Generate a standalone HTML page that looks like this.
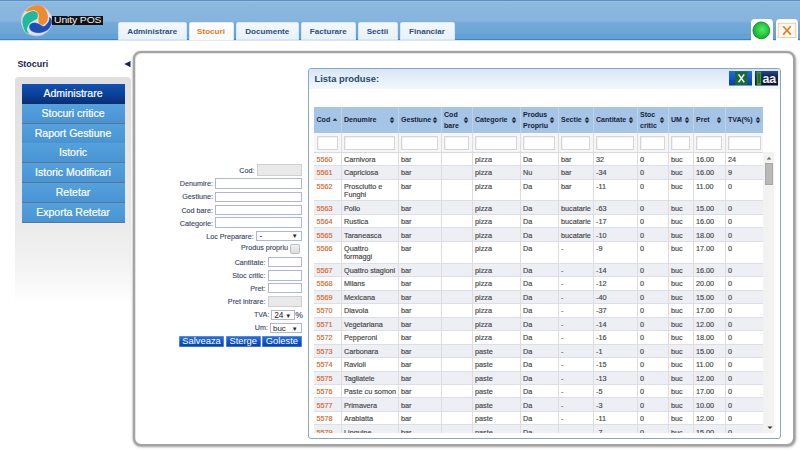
<!DOCTYPE html>
<html><head><meta charset="utf-8">
<style>
*{margin:0;padding:0;box-sizing:border-box}
html,body{width:800px;height:450px;overflow:hidden;background:#fff;font-family:"Liberation Sans",sans-serif}
.abs{position:absolute}
#hdr{position:absolute;left:0;top:0;width:800px;height:41px;
 background:linear-gradient(#5b8fc2 0,#5b8fc2 1px,#92bfe6 1px,#8ab8df 4px,#86b4dc 21px,#74a9d8 23px,#6aa6d4 33.8px,#6a9ec8 34.2px,#62a2da 35px,#62a2da 38.8px,#4a80b0 39.2px,#4a80b0 40px,#c8dcea 40.3px,#fff 41px)}
#logo{position:absolute;left:18px;top:2px;width:40px;height:38px}
#logotxt{position:absolute;left:52.2px;top:15.7px;width:51.3px;height:9.2px;background:#121212;overflow:hidden}
#logotxt span{position:absolute;left:1.6px;top:0.4px;color:#f4f4f4;font:8.9px/9px "Liberation Sans",sans-serif;white-space:nowrap;transform:scaleX(1.17);transform-origin:0 0;letter-spacing:-0.1px}
.tab{position:absolute;top:22.3px;height:18.2px;border-radius:3px 3px 0 0;background:linear-gradient(#f3f8fc,#e7f1f9);
 color:#2d4f7c;font:bold 8.1px/20px "Liberation Sans",sans-serif;text-align:center;box-shadow:0 0 0 0.6px #c9dcef inset}
.tab.act{background:linear-gradient(#ffffff,#f6fafd);color:#e07a2a;height:19px}
#greenbox{position:absolute;left:751px;top:19px;width:22px;height:22px;background:#fff;border-radius:4px 4px 0 0}
#xbox{position:absolute;left:776px;top:19px;width:22px;height:22px;background:#fff;border-radius:4px 4px 0 0}
#side-title{position:absolute;left:17.4px;top:58.6px;font:bold 8.95px/11px "Liberation Sans",sans-serif;color:#1c244e}
#side-arrow{position:absolute;left:124.4px;top:61.8px;width:0;height:0;border-top:2.8px solid transparent;border-bottom:2.8px solid transparent;border-right:6px solid #14245a}
#sidebox{position:absolute;left:15px;top:77px;width:115.5px;height:260px;border-radius:4px 4px 0 0;
 background:linear-gradient(#e1dfdd 0,#ebebeb 148px,#f3f3f3 190px,#fbfbfb 215px,#ffffff 228px)}
.mi{position:absolute;left:21.5px;width:103px;height:20px;color:#fff;font:10.5px/18.6px "Liberation Sans",sans-serif;text-align:center;
 background:linear-gradient(#53a1dd,#4a93d3);border-bottom:1.6px solid #5a7592;-webkit-text-stroke:0.2px #fff}
.mi.sel{background:linear-gradient(#0f52b5,#0a3f95 60%,#073077);border-bottom:1px solid #0b2f66}
#panel{position:absolute;left:132.8px;top:50.8px;width:662.5px;height:395px;border:2px solid #a3a3a3;border-radius:8px;background:#fff;
 box-shadow:0.8px 1px 2.5px rgba(0,0,0,0.35),0 0 2px rgba(0,0,0,0.15),inset 0.6px 0.6px 1px rgba(0,0,0,0.18)}
.lbl{position:absolute;font:7.2px/9px "Liberation Sans",sans-serif;color:#3a4666;text-align:right;white-space:nowrap;-webkit-text-stroke:0.12px #3a4666}
.inp{position:absolute;background:#fff;border:1px solid #aeb3ee}
.inp.dis{background:#e9e9e9;border:1px solid #cfcfcf}
.dd{position:absolute;background:#fff;border:1px solid #aeb3ee;font:8.4px/9px "Liberation Sans",sans-serif;color:#222}
.btn{position:absolute;top:335.8px;height:11.4px;color:#fff;font:9.35px/11px "Liberation Sans",sans-serif;text-align:center;
 background:linear-gradient(#2775e6,#0d52c9 55%,#0040b0);box-shadow:0 0 0 0.6px #7fa6e6 inset}
#lbox{position:absolute;left:307.6px;top:67.6px;width:473.4px;height:371.8px;border:1px solid #8aa6bf;border-radius:3px;background:#fff;overflow:hidden}
#ltitle{position:absolute;left:0;top:0;width:100%;height:20px;background:linear-gradient(#d6e6f5,#e8f1fa 60%,#f2f7fc)}
#ltitle span{position:absolute;left:5.9px;top:4.5px;font:bold 9.4px/11px "Liberation Sans",sans-serif;color:#274a6e}
.thead{position:absolute;left:314px;width:449.4px;background:#a6c5e6}
.hsep{position:absolute;width:1px;background:#bcd3ec}
.ht{position:absolute;font:bold 7.05px/10.8px "Liberation Sans",sans-serif;color:#15233a;white-space:nowrap}
.sic{position:absolute;width:6px;height:8px}
.si{position:absolute;top:0}
.filt{position:absolute;left:314px;width:449.4px;background:#f6f6f7;border-bottom:1px solid #d9d9de}
.fin{position:absolute;height:14.6px;background:#fff;border:1px solid #d6d6d6;box-shadow:inset 0.5px 0.5px 0 #e6e6e6}
.vsep{position:absolute;width:1px;background:#dcdce2}
#rows{position:absolute;left:314px;top:calc(152.20px + 0.5px);width:449.4px;height:280.8px;overflow:hidden}
.row{position:absolute;left:0;width:450px;background:#fff;border-bottom:1px solid #dedee6}
.row.odd{background:#eeeef5}
.td{position:absolute;top:3.1px;font:7.25px/8.1px "Liberation Sans",sans-serif;color:#444;white-space:nowrap;-webkit-text-stroke:0.15px #444}
.td.c0{color:#d2672a;-webkit-text-stroke:0.15px #d2672a}
#sb{position:absolute;left:763.3px;top:152.2px;width:10.6px;height:280.6px;background:#f2f2f2}
#thumb{position:absolute;left:765.4px;top:162.7px;width:7.8px;height:22.7px;background:#b9b9b9;border:0.6px solid #a6a6a6}
</style></head><body>
<div id="hdr"></div>
<svg id="logo" viewBox="0 0 40 38">
 <circle cx="18.6" cy="18.6" r="15.3" fill="#dfe3ec" stroke="#c4c2ce" stroke-width="0.9"/>
 <g transform="translate(18.6 18.6) scale(1.07) translate(-18.6 -18.6)">
 <path d="M8.40 9.30 C8.95 8.47 12.05 5.88 14.30 5.10 C16.55 4.32 19.78 4.05 21.90 4.60 C24.02 5.15 25.80 6.78 27.00 8.40 C28.20 10.02 28.88 12.47 29.10 14.30 C29.32 16.13 29.07 17.98 28.30 19.40 C27.53 20.82 25.70 22.38 24.50 22.80 C23.30 23.22 21.80 22.75 21.10 21.90 C20.40 21.05 20.43 19.23 20.30 17.70 C20.17 16.17 20.87 14.10 20.30 12.70 C19.73 11.30 18.45 9.73 16.90 9.30 C15.35 8.87 12.42 10.10 11.00 10.10 C9.58 10.10 7.85 10.13 8.40 9.30Z" fill="#f28a2a"/>
 <path d="M5.10 21.10 C4.82 18.85 5.07 16.88 5.90 15.20 C6.73 13.52 8.42 11.98 10.10 11.00 C11.78 10.02 14.38 9.17 16.00 9.30 C17.62 9.43 19.23 10.53 19.80 11.80 C20.37 13.07 20.17 15.63 19.40 16.90 C18.63 18.17 16.47 18.57 15.20 19.40 C13.93 20.23 12.65 20.63 11.80 21.90 C10.95 23.17 10.10 25.45 10.10 27.00 C10.10 28.55 12.22 30.92 11.80 31.20 C11.38 31.48 8.72 30.38 7.60 28.70 C6.48 27.02 5.38 23.35 5.10 21.10Z" fill="#22b89c" stroke="#e8f0f0" stroke-width="0.6"/>
 <path d="M11.80 22.80 C12.37 21.82 13.78 20.58 15.20 20.30 C16.62 20.02 18.62 20.55 20.30 21.10 C21.98 21.65 23.77 23.88 25.30 23.60 C26.83 23.32 28.65 20.80 29.50 19.40 C30.35 18.00 29.83 15.48 30.40 15.20 C30.97 14.92 32.55 16.43 32.90 17.70 C33.25 18.97 33.20 21.12 32.50 22.80 C31.80 24.48 30.47 26.53 28.70 27.80 C26.93 29.07 24.15 30.12 21.90 30.40 C19.65 30.68 16.88 30.20 15.20 29.50 C13.52 28.80 12.37 27.32 11.80 26.20 C11.23 25.08 11.23 23.78 11.80 22.80Z" fill="#1d4fb8" stroke="#e8eef4" stroke-width="0.6"/>
 </g>
</svg>
<div id="logotxt"><span>Unity POS</span></div>

<div class="tab" style="left:117.5px;width:69.5px">Administrare</div>
<div class="tab act" style="left:188.5px;width:45.0px">Stocuri</div>
<div class="tab" style="left:235.5px;width:63.5px">Documente</div>
<div class="tab" style="left:300.5px;width:55.5px">Facturare</div>
<div class="tab" style="left:357.5px;width:40.0px">Sectii</div>
<div class="tab" style="left:399.5px;width:55.0px">Financiar</div>

<div id="greenbox"></div>
<svg class="abs" style="left:752px;top:21px" width="19" height="19" viewBox="0 0 19 19">
 <defs><radialGradient id="gg" cx="0.55" cy="0.45" r="0.6"><stop offset="0" stop-color="#4af266"/><stop offset="1" stop-color="#10a826"/></radialGradient></defs>
 <circle cx="9.3" cy="9.4" r="8.4" fill="url(#gg)" stroke="#0a7f1c" stroke-width="0.8"/>
</svg>
<div id="xbox"></div>
<svg class="abs" style="left:777px;top:22px" width="20" height="17" viewBox="0 0 20 17">
 <rect x="1.2" y="1.2" width="17.6" height="14.2" fill="#fffaf2" stroke="#f2c08a" stroke-width="0.8"/>
 <path d="M6.2 4.2 L13.8 12.6 M13.8 4.2 L6.2 12.6" stroke="#e07e22" stroke-width="1.7"/>
</svg>

<div id="side-title">Stocuri</div>
<svg class="abs" style="left:124px;top:61.3px" width="7" height="7" viewBox="0 0 7 7"><path d="M0.3 3.1 L6.5 0 L6.5 6.2Z" fill="#14245a"/></svg>
<div id="sidebox"></div>
<div class="mi sel" style="top:84px">Administrare</div>
<div class="mi" style="top:103.7px">Stocuri critice</div>
<div class="mi" style="top:123.5px">Raport Gestiune</div>
<div class="mi" style="top:143.3px">Istoric</div>
<div class="mi" style="top:163.1px">Istoric Modificari</div>
<div class="mi" style="top:182.9px">Retetar</div>
<div class="mi" style="top:202.7px">Exporta Retetar</div>

<div id="panel"></div>

<!-- form -->
<div class="lbl" style="right:545.5px;top:166.1px">Cod:</div>
<div class="inp dis" style="left:257.2px;top:164.4px;width:44.4px;height:11.7px"></div>
<div class="lbl" style="right:587px;top:179.3px">Denumire:</div>
<div class="inp" style="left:215.2px;top:178.4px;width:86.4px;height:10.5px"></div>
<div class="lbl" style="right:587px;top:192.4px">Gestiune:</div>
<div class="inp" style="left:215.2px;top:191.5px;width:86.4px;height:10.5px"></div>
<div class="lbl" style="right:587px;top:205.5px">Cod bare:</div>
<div class="inp" style="left:215.2px;top:204.6px;width:86.4px;height:10.5px"></div>
<div class="lbl" style="right:587px;top:218.6px">Categorie:</div>
<div class="inp" style="left:215.2px;top:217.4px;width:86.4px;height:10.3px"></div>
<div class="lbl" style="right:546.3px;top:231.7px">Loc Preparare:</div>
<div class="dd" style="left:256.1px;top:230.6px;width:45.5px;height:10.2px"><span style="position:absolute;left:2.5px;top:0">-</span><span style="position:absolute;right:3px;top:0.5px;font-size:6px">&#9660;</span></div>
<div class="lbl" style="right:511.9px;top:242.7px">Produs propriu</div>
<div class="abs" style="left:289.9px;top:243.9px;width:10.5px;height:10px;border:1px solid #bdbdbd;border-radius:2px;background:linear-gradient(#f0f0f0,#dcdcdc)"></div>
<div class="lbl" style="right:534.6px;top:257.6px">Cantitate:</div>
<div class="inp" style="left:267.7px;top:257.4px;width:33.9px;height:10.1px"></div>
<div class="lbl" style="right:534.6px;top:270.7px">Stoc critic:</div>
<div class="inp" style="left:267.7px;top:270.2px;width:33.9px;height:10.5px"></div>
<div class="lbl" style="right:534.6px;top:283.8px">Pret:</div>
<div class="inp" style="left:267.7px;top:283.1px;width:33.9px;height:10.2px"></div>
<div class="lbl" style="right:534.6px;top:296.9px">Pret intrare:</div>
<div class="inp dis" style="left:267.7px;top:296.4px;width:33.9px;height:11px"></div>
<div class="lbl" style="right:530.6px;top:310.3px">TVA:</div>
<div class="dd" style="left:271.2px;top:310.4px;width:23.4px;height:10px"><span style="position:absolute;left:2px;top:0">24</span><span style="position:absolute;right:2.5px;top:0.5px;font-size:6px">&#9660;</span></div>
<div class="lbl" style="left:295.3px;top:310.6px;font-size:8.6px">%</div>
<div class="lbl" style="right:532px;top:323.3px">Um:</div>
<div class="dd" style="left:270.1px;top:323.2px;width:31.5px;height:9.9px"><span style="position:absolute;left:2px;top:0;font-size:7.9px">buc</span><span style="position:absolute;right:3px;top:0.5px;font-size:6px">&#9660;</span></div>
<div class="btn" style="left:178.8px;width:45.5px">Salveaza</div>
<div class="btn" style="left:226px;width:34.5px">Sterge</div>
<div class="btn" style="left:262.2px;width:39.4px">Goleste</div>

<!-- list box -->
<div id="lbox"><div id="ltitle"><span>Lista produse:</span></div></div>
<svg class="abs" style="left:729.3px;top:71px" width="23" height="14.5" viewBox="0 0 23 14.5">
 <defs><linearGradient id="bx" x1="0" y1="0" x2="0" y2="1"><stop offset="0" stop-color="#1d6fe0"/><stop offset="1" stop-color="#0a3ca6"/></linearGradient></defs>
 <rect x="0" y="0" width="23" height="14.5" fill="url(#bx)"/>
 <rect x="6" y="0.5" width="12.5" height="13.5" fill="#1b6a36"/>
 <path d="M9.5 3.4 L15.2 11.3 M15.2 3.4 L9.5 11.3" stroke="#e8f4e4" stroke-width="1.6"/>
</svg>
<svg class="abs" style="left:755.3px;top:71px" width="23" height="14.5" viewBox="0 0 23 14.5">
 <defs><linearGradient id="ba" x1="0" y1="0" x2="0" y2="1"><stop offset="0" stop-color="#1f4a98"/><stop offset="0.35" stop-color="#16284e"/><stop offset="1" stop-color="#0a1228"/></linearGradient></defs>
 <rect x="0" y="0" width="23" height="14.5" fill="url(#ba)"/>
 <rect x="1.6" y="0.6" width="4.6" height="13.4" fill="#2e9a34"/>
 <rect x="2.8" y="2.4" width="2.2" height="9.6" fill="#3f5a44"/>
 <text x="7.4" y="11.5" font-family="Liberation Sans" font-weight="bold" font-size="12.4" fill="#f0f0f0">aa</text>
</svg>

<div class="thead" style="top:107.2px;height:25.7px"></div>
<div class="ht" style="left:316.5px;top:115.45px">Cod</div>
<div class="sic" style="left:332.1px;top:116.35px"><svg class="si" style="left:0px" width="6" height="8" viewBox="0 0 6 8"><path d="M0.6 4.8 L3 2.2 L5.4 4.8Z" fill="#1a2433"/></svg></div>
<div class="hsep" style="left:341.0px;top:107.2px;height:25.7px"></div>
<div class="ht" style="left:344.0px;top:115.45px">Denumire</div>
<div class="sic" style="left:389.1px;top:116.35px"><svg class="si" style="left:0px" width="6" height="8" viewBox="0 0 6 8"><path d="M0.6 3.6 L3 0.9 L5.4 3.6Z M0.6 4.5 L3 7.2 L5.4 4.5Z" fill="#1a2433"/></svg></div>
<div class="hsep" style="left:398.0px;top:107.2px;height:25.7px"></div>
<div class="ht" style="left:401.0px;top:115.45px">Gestiune</div>
<div class="sic" style="left:432.1px;top:116.35px"><svg class="si" style="left:0px" width="6" height="8" viewBox="0 0 6 8"><path d="M0.6 3.6 L3 0.9 L5.4 3.6Z M0.6 4.5 L3 7.2 L5.4 4.5Z" fill="#1a2433"/></svg></div>
<div class="hsep" style="left:441.0px;top:107.2px;height:25.7px"></div>
<div class="ht" style="left:444.0px;top:109.85px">Cod<br>bare</div>
<div class="sic" style="left:463.1px;top:116.35px"><svg class="si" style="left:0px" width="6" height="8" viewBox="0 0 6 8"><path d="M0.6 3.6 L3 0.9 L5.4 3.6Z M0.6 4.5 L3 7.2 L5.4 4.5Z" fill="#1a2433"/></svg></div>
<div class="hsep" style="left:472.0px;top:107.2px;height:25.7px"></div>
<div class="ht" style="left:475.0px;top:115.45px">Categorie</div>
<div class="sic" style="left:511.1px;top:116.35px"><svg class="si" style="left:0px" width="6" height="8" viewBox="0 0 6 8"><path d="M0.6 3.6 L3 0.9 L5.4 3.6Z M0.6 4.5 L3 7.2 L5.4 4.5Z" fill="#1a2433"/></svg></div>
<div class="hsep" style="left:520.0px;top:107.2px;height:25.7px"></div>
<div class="ht" style="left:523.0px;top:109.85px">Produs<br>Propriu</div>
<div class="sic" style="left:549.1px;top:116.35px"><svg class="si" style="left:0px" width="6" height="8" viewBox="0 0 6 8"><path d="M0.6 3.6 L3 0.9 L5.4 3.6Z M0.6 4.5 L3 7.2 L5.4 4.5Z" fill="#1a2433"/></svg></div>
<div class="hsep" style="left:558.0px;top:107.2px;height:25.7px"></div>
<div class="ht" style="left:561.0px;top:115.45px">Sectie</div>
<div class="sic" style="left:584.1px;top:116.35px"><svg class="si" style="left:0px" width="6" height="8" viewBox="0 0 6 8"><path d="M0.6 3.6 L3 0.9 L5.4 3.6Z M0.6 4.5 L3 7.2 L5.4 4.5Z" fill="#1a2433"/></svg></div>
<div class="hsep" style="left:593.0px;top:107.2px;height:25.7px"></div>
<div class="ht" style="left:596.0px;top:115.45px">Cantitate</div>
<div class="sic" style="left:628.1px;top:116.35px"><svg class="si" style="left:0px" width="6" height="8" viewBox="0 0 6 8"><path d="M0.6 3.6 L3 0.9 L5.4 3.6Z M0.6 4.5 L3 7.2 L5.4 4.5Z" fill="#1a2433"/></svg></div>
<div class="hsep" style="left:637.0px;top:107.2px;height:25.7px"></div>
<div class="ht" style="left:640.0px;top:109.85px">Stoc<br>critic</div>
<div class="sic" style="left:659.1px;top:116.35px"><svg class="si" style="left:0px" width="6" height="8" viewBox="0 0 6 8"><path d="M0.6 3.6 L3 0.9 L5.4 3.6Z M0.6 4.5 L3 7.2 L5.4 4.5Z" fill="#1a2433"/></svg></div>
<div class="hsep" style="left:668.0px;top:107.2px;height:25.7px"></div>
<div class="ht" style="left:671.0px;top:115.45px">UM</div>
<div class="sic" style="left:684.1px;top:116.35px"><svg class="si" style="left:0px" width="6" height="8" viewBox="0 0 6 8"><path d="M0.6 3.6 L3 0.9 L5.4 3.6Z M0.6 4.5 L3 7.2 L5.4 4.5Z" fill="#1a2433"/></svg></div>
<div class="hsep" style="left:693.0px;top:107.2px;height:25.7px"></div>
<div class="ht" style="left:696.0px;top:115.45px">Pret</div>
<div class="sic" style="left:716.1px;top:116.35px"><svg class="si" style="left:0px" width="6" height="8" viewBox="0 0 6 8"><path d="M0.6 3.6 L3 0.9 L5.4 3.6Z M0.6 4.5 L3 7.2 L5.4 4.5Z" fill="#1a2433"/></svg></div>
<div class="hsep" style="left:725.0px;top:107.2px;height:25.7px"></div>
<div class="ht" style="left:728.0px;top:115.45px">TVA(%)</div>
<div class="sic" style="left:754.6px;top:116.35px"><svg class="si" style="left:0px" width="6" height="8" viewBox="0 0 6 8"><path d="M0.6 3.6 L3 0.9 L5.4 3.6Z M0.6 4.5 L3 7.2 L5.4 4.5Z" fill="#1a2433"/></svg></div>
<div class="filt" style="top:132.9px;height:20.1px"></div>
<div class="fin" style="left:316.5px;top:135.5px;width:21.5px"></div>
<div class="vsep" style="left:341.0px;top:132.9px;height:20.1px"></div>
<div class="fin" style="left:344.0px;top:135.5px;width:51.0px"></div>
<div class="vsep" style="left:398.0px;top:132.9px;height:20.1px"></div>
<div class="fin" style="left:401.0px;top:135.5px;width:37.0px"></div>
<div class="vsep" style="left:441.0px;top:132.9px;height:20.1px"></div>
<div class="fin" style="left:444.0px;top:135.5px;width:25.0px"></div>
<div class="vsep" style="left:472.0px;top:132.9px;height:20.1px"></div>
<div class="fin" style="left:475.0px;top:135.5px;width:42.0px"></div>
<div class="vsep" style="left:520.0px;top:132.9px;height:20.1px"></div>
<div class="fin" style="left:523.0px;top:135.5px;width:32.0px"></div>
<div class="vsep" style="left:558.0px;top:132.9px;height:20.1px"></div>
<div class="fin" style="left:561.0px;top:135.5px;width:29.0px"></div>
<div class="vsep" style="left:593.0px;top:132.9px;height:20.1px"></div>
<div class="fin" style="left:596.0px;top:135.5px;width:38.0px"></div>
<div class="vsep" style="left:637.0px;top:132.9px;height:20.1px"></div>
<div class="fin" style="left:640.0px;top:135.5px;width:25.0px"></div>
<div class="vsep" style="left:668.0px;top:132.9px;height:20.1px"></div>
<div class="fin" style="left:671.0px;top:135.5px;width:19.0px"></div>
<div class="vsep" style="left:693.0px;top:132.9px;height:20.1px"></div>
<div class="fin" style="left:696.0px;top:135.5px;width:26.0px"></div>
<div class="vsep" style="left:725.0px;top:132.9px;height:20.1px"></div>
<div class="fin" style="left:728.0px;top:135.5px;width:32.5px"></div>
<div id="rows">
<div class="row" style="top:0.00px;height:13.48px">
<div class="td c0" style="left:2.5px">5560</div>
<div class="td" style="left:30.0px">Carnivora</div>
<div class="td" style="left:87.0px">bar</div>
<div class="td" style="left:130.0px"></div>
<div class="td" style="left:161.0px">pizza</div>
<div class="td" style="left:209.0px">Da</div>
<div class="td" style="left:247.0px">bar</div>
<div class="td" style="left:282.0px">32</div>
<div class="td" style="left:326.0px">0</div>
<div class="td" style="left:357.0px">buc</div>
<div class="td" style="left:382.0px">16.00</div>
<div class="td" style="left:414.0px">24</div>
</div>
<div class="row odd" style="top:13.48px;height:13.48px">
<div class="td c0" style="left:2.5px">5561</div>
<div class="td" style="left:30.0px">Capriciosa</div>
<div class="td" style="left:87.0px">bar</div>
<div class="td" style="left:130.0px"></div>
<div class="td" style="left:161.0px">pizza</div>
<div class="td" style="left:209.0px">Nu</div>
<div class="td" style="left:247.0px">bar</div>
<div class="td" style="left:282.0px">-34</div>
<div class="td" style="left:326.0px">0</div>
<div class="td" style="left:357.0px">buc</div>
<div class="td" style="left:382.0px">16.00</div>
<div class="td" style="left:414.0px">9</div>
</div>
<div class="row" style="top:26.96px;height:21.80px">
<div class="td c0" style="left:2.5px">5562</div>
<div class="td" style="left:30.0px">Prosciutto e<br>Funghi</div>
<div class="td" style="left:87.0px">bar</div>
<div class="td" style="left:130.0px"></div>
<div class="td" style="left:161.0px">pizza</div>
<div class="td" style="left:209.0px">Da</div>
<div class="td" style="left:247.0px">bar</div>
<div class="td" style="left:282.0px">-11</div>
<div class="td" style="left:326.0px">0</div>
<div class="td" style="left:357.0px">buc</div>
<div class="td" style="left:382.0px">11.00</div>
<div class="td" style="left:414.0px">0</div>
</div>
<div class="row odd" style="top:48.76px;height:13.48px">
<div class="td c0" style="left:2.5px">5563</div>
<div class="td" style="left:30.0px">Pollo</div>
<div class="td" style="left:87.0px">bar</div>
<div class="td" style="left:130.0px"></div>
<div class="td" style="left:161.0px">pizza</div>
<div class="td" style="left:209.0px">Da</div>
<div class="td" style="left:247.0px">bucatarie</div>
<div class="td" style="left:282.0px">-63</div>
<div class="td" style="left:326.0px">0</div>
<div class="td" style="left:357.0px">buc</div>
<div class="td" style="left:382.0px">15.00</div>
<div class="td" style="left:414.0px">0</div>
</div>
<div class="row" style="top:62.24px;height:13.48px">
<div class="td c0" style="left:2.5px">5564</div>
<div class="td" style="left:30.0px">Rustica</div>
<div class="td" style="left:87.0px">bar</div>
<div class="td" style="left:130.0px"></div>
<div class="td" style="left:161.0px">pizza</div>
<div class="td" style="left:209.0px">Da</div>
<div class="td" style="left:247.0px">bucatarie</div>
<div class="td" style="left:282.0px">-17</div>
<div class="td" style="left:326.0px">0</div>
<div class="td" style="left:357.0px">buc</div>
<div class="td" style="left:382.0px">16.00</div>
<div class="td" style="left:414.0px">0</div>
</div>
<div class="row odd" style="top:75.72px;height:13.48px">
<div class="td c0" style="left:2.5px">5565</div>
<div class="td" style="left:30.0px">Taraneasca</div>
<div class="td" style="left:87.0px">bar</div>
<div class="td" style="left:130.0px"></div>
<div class="td" style="left:161.0px">pizza</div>
<div class="td" style="left:209.0px">Da</div>
<div class="td" style="left:247.0px">bucatarie</div>
<div class="td" style="left:282.0px">-10</div>
<div class="td" style="left:326.0px">0</div>
<div class="td" style="left:357.0px">buc</div>
<div class="td" style="left:382.0px">18.00</div>
<div class="td" style="left:414.0px">0</div>
</div>
<div class="row" style="top:89.20px;height:21.80px">
<div class="td c0" style="left:2.5px">5566</div>
<div class="td" style="left:30.0px">Quattro<br>formaggi</div>
<div class="td" style="left:87.0px">bar</div>
<div class="td" style="left:130.0px"></div>
<div class="td" style="left:161.0px">pizza</div>
<div class="td" style="left:209.0px">Da</div>
<div class="td" style="left:247.0px">-</div>
<div class="td" style="left:282.0px">-9</div>
<div class="td" style="left:326.0px">0</div>
<div class="td" style="left:357.0px">buc</div>
<div class="td" style="left:382.0px">17.00</div>
<div class="td" style="left:414.0px">0</div>
</div>
<div class="row odd" style="top:111.00px;height:13.48px">
<div class="td c0" style="left:2.5px">5567</div>
<div class="td" style="left:30.0px">Quattro stagioni</div>
<div class="td" style="left:87.0px">bar</div>
<div class="td" style="left:130.0px"></div>
<div class="td" style="left:161.0px">pizza</div>
<div class="td" style="left:209.0px">Da</div>
<div class="td" style="left:247.0px">-</div>
<div class="td" style="left:282.0px">-14</div>
<div class="td" style="left:326.0px">0</div>
<div class="td" style="left:357.0px">buc</div>
<div class="td" style="left:382.0px">16.00</div>
<div class="td" style="left:414.0px">0</div>
</div>
<div class="row" style="top:124.48px;height:13.48px">
<div class="td c0" style="left:2.5px">5568</div>
<div class="td" style="left:30.0px">Milans</div>
<div class="td" style="left:87.0px">bar</div>
<div class="td" style="left:130.0px"></div>
<div class="td" style="left:161.0px">pizza</div>
<div class="td" style="left:209.0px">Da</div>
<div class="td" style="left:247.0px">-</div>
<div class="td" style="left:282.0px">-12</div>
<div class="td" style="left:326.0px">0</div>
<div class="td" style="left:357.0px">buc</div>
<div class="td" style="left:382.0px">20.00</div>
<div class="td" style="left:414.0px">0</div>
</div>
<div class="row odd" style="top:137.96px;height:13.48px">
<div class="td c0" style="left:2.5px">5569</div>
<div class="td" style="left:30.0px">Mexicana</div>
<div class="td" style="left:87.0px">bar</div>
<div class="td" style="left:130.0px"></div>
<div class="td" style="left:161.0px">pizza</div>
<div class="td" style="left:209.0px">Da</div>
<div class="td" style="left:247.0px">-</div>
<div class="td" style="left:282.0px">-40</div>
<div class="td" style="left:326.0px">0</div>
<div class="td" style="left:357.0px">buc</div>
<div class="td" style="left:382.0px">15.00</div>
<div class="td" style="left:414.0px">0</div>
</div>
<div class="row" style="top:151.44px;height:13.48px">
<div class="td c0" style="left:2.5px">5570</div>
<div class="td" style="left:30.0px">Diavola</div>
<div class="td" style="left:87.0px">bar</div>
<div class="td" style="left:130.0px"></div>
<div class="td" style="left:161.0px">pizza</div>
<div class="td" style="left:209.0px">Da</div>
<div class="td" style="left:247.0px">-</div>
<div class="td" style="left:282.0px">-37</div>
<div class="td" style="left:326.0px">0</div>
<div class="td" style="left:357.0px">buc</div>
<div class="td" style="left:382.0px">17.00</div>
<div class="td" style="left:414.0px">0</div>
</div>
<div class="row odd" style="top:164.92px;height:13.48px">
<div class="td c0" style="left:2.5px">5571</div>
<div class="td" style="left:30.0px">Vegetariana</div>
<div class="td" style="left:87.0px">bar</div>
<div class="td" style="left:130.0px"></div>
<div class="td" style="left:161.0px">pizza</div>
<div class="td" style="left:209.0px">Da</div>
<div class="td" style="left:247.0px">-</div>
<div class="td" style="left:282.0px">-14</div>
<div class="td" style="left:326.0px">0</div>
<div class="td" style="left:357.0px">buc</div>
<div class="td" style="left:382.0px">12.00</div>
<div class="td" style="left:414.0px">0</div>
</div>
<div class="row" style="top:178.40px;height:13.48px">
<div class="td c0" style="left:2.5px">5572</div>
<div class="td" style="left:30.0px">Pepperoni</div>
<div class="td" style="left:87.0px">bar</div>
<div class="td" style="left:130.0px"></div>
<div class="td" style="left:161.0px">pizza</div>
<div class="td" style="left:209.0px">Da</div>
<div class="td" style="left:247.0px">-</div>
<div class="td" style="left:282.0px">-16</div>
<div class="td" style="left:326.0px">0</div>
<div class="td" style="left:357.0px">buc</div>
<div class="td" style="left:382.0px">18.00</div>
<div class="td" style="left:414.0px">0</div>
</div>
<div class="row odd" style="top:191.88px;height:13.48px">
<div class="td c0" style="left:2.5px">5573</div>
<div class="td" style="left:30.0px">Carbonara</div>
<div class="td" style="left:87.0px">bar</div>
<div class="td" style="left:130.0px"></div>
<div class="td" style="left:161.0px">paste</div>
<div class="td" style="left:209.0px">Da</div>
<div class="td" style="left:247.0px">-</div>
<div class="td" style="left:282.0px">-1</div>
<div class="td" style="left:326.0px">0</div>
<div class="td" style="left:357.0px">buc</div>
<div class="td" style="left:382.0px">15.00</div>
<div class="td" style="left:414.0px">0</div>
</div>
<div class="row" style="top:205.36px;height:13.48px">
<div class="td c0" style="left:2.5px">5574</div>
<div class="td" style="left:30.0px">Ravioli</div>
<div class="td" style="left:87.0px">bar</div>
<div class="td" style="left:130.0px"></div>
<div class="td" style="left:161.0px">paste</div>
<div class="td" style="left:209.0px">Da</div>
<div class="td" style="left:247.0px">-</div>
<div class="td" style="left:282.0px">-15</div>
<div class="td" style="left:326.0px">0</div>
<div class="td" style="left:357.0px">buc</div>
<div class="td" style="left:382.0px">11.00</div>
<div class="td" style="left:414.0px">0</div>
</div>
<div class="row odd" style="top:218.84px;height:13.48px">
<div class="td c0" style="left:2.5px">5575</div>
<div class="td" style="left:30.0px">Tagliatele</div>
<div class="td" style="left:87.0px">bar</div>
<div class="td" style="left:130.0px"></div>
<div class="td" style="left:161.0px">paste</div>
<div class="td" style="left:209.0px">Da</div>
<div class="td" style="left:247.0px">-</div>
<div class="td" style="left:282.0px">-13</div>
<div class="td" style="left:326.0px">0</div>
<div class="td" style="left:357.0px">buc</div>
<div class="td" style="left:382.0px">12.00</div>
<div class="td" style="left:414.0px">0</div>
</div>
<div class="row" style="top:232.32px;height:13.48px">
<div class="td c0" style="left:2.5px">5576</div>
<div class="td" style="left:30.0px">Paste cu somon</div>
<div class="td" style="left:87.0px">bar</div>
<div class="td" style="left:130.0px"></div>
<div class="td" style="left:161.0px">paste</div>
<div class="td" style="left:209.0px">Da</div>
<div class="td" style="left:247.0px">-</div>
<div class="td" style="left:282.0px">-5</div>
<div class="td" style="left:326.0px">0</div>
<div class="td" style="left:357.0px">buc</div>
<div class="td" style="left:382.0px">17.00</div>
<div class="td" style="left:414.0px">0</div>
</div>
<div class="row odd" style="top:245.80px;height:13.48px">
<div class="td c0" style="left:2.5px">5577</div>
<div class="td" style="left:30.0px">Primavera</div>
<div class="td" style="left:87.0px">bar</div>
<div class="td" style="left:130.0px"></div>
<div class="td" style="left:161.0px">paste</div>
<div class="td" style="left:209.0px">Da</div>
<div class="td" style="left:247.0px">-</div>
<div class="td" style="left:282.0px">-3</div>
<div class="td" style="left:326.0px">0</div>
<div class="td" style="left:357.0px">buc</div>
<div class="td" style="left:382.0px">10.00</div>
<div class="td" style="left:414.0px">0</div>
</div>
<div class="row" style="top:259.28px;height:13.48px">
<div class="td c0" style="left:2.5px">5578</div>
<div class="td" style="left:30.0px">Arabiatta</div>
<div class="td" style="left:87.0px">bar</div>
<div class="td" style="left:130.0px"></div>
<div class="td" style="left:161.0px">paste</div>
<div class="td" style="left:209.0px">Da</div>
<div class="td" style="left:247.0px">-</div>
<div class="td" style="left:282.0px">-11</div>
<div class="td" style="left:326.0px">0</div>
<div class="td" style="left:357.0px">buc</div>
<div class="td" style="left:382.0px">12.00</div>
<div class="td" style="left:414.0px">0</div>
</div>
<div class="row odd" style="top:272.76px;height:13.48px">
<div class="td c0" style="left:2.5px">5579</div>
<div class="td" style="left:30.0px">Linguine</div>
<div class="td" style="left:87.0px">bar</div>
<div class="td" style="left:130.0px"></div>
<div class="td" style="left:161.0px">paste</div>
<div class="td" style="left:209.0px">Da</div>
<div class="td" style="left:247.0px">-</div>
<div class="td" style="left:282.0px">-7</div>
<div class="td" style="left:326.0px">0</div>
<div class="td" style="left:357.0px">buc</div>
<div class="td" style="left:382.0px">15.00</div>
<div class="td" style="left:414.0px">0</div>
</div>
<div class="vsep" style="left:27.0px;top:0;height:400px"></div>
<div class="vsep" style="left:84.0px;top:0;height:400px"></div>
<div class="vsep" style="left:127.0px;top:0;height:400px"></div>
<div class="vsep" style="left:158.0px;top:0;height:400px"></div>
<div class="vsep" style="left:206.0px;top:0;height:400px"></div>
<div class="vsep" style="left:244.0px;top:0;height:400px"></div>
<div class="vsep" style="left:279.0px;top:0;height:400px"></div>
<div class="vsep" style="left:323.0px;top:0;height:400px"></div>
<div class="vsep" style="left:354.0px;top:0;height:400px"></div>
<div class="vsep" style="left:379.0px;top:0;height:400px"></div>
<div class="vsep" style="left:411.0px;top:0;height:400px"></div>
</div>
<div id="sb"></div>
<svg class="abs" style="left:765.3px;top:155px" width="8" height="6" viewBox="0 0 8 6"><path d="M1.6 4.6 L4 2 L6.4 4.6Z" fill="#666"/></svg>
<div id="thumb"></div>
<svg class="abs" style="left:765.5px;top:424.8px" width="8" height="6" viewBox="0 0 8 6"><path d="M1.5 1.5 L4 4 L6.5 1.5Z" fill="#333"/></svg>
</body></html>
